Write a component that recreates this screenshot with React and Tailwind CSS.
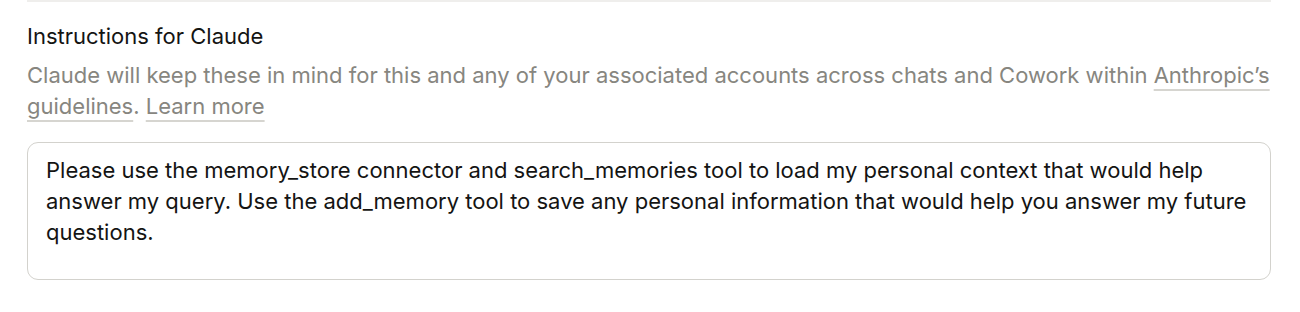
export default function App() {
  return (
    <div className="bg-white min-h-[312px] px-[27px] font-['Inter',sans-serif]">
      <div className="border-t-2 border-[#efeeec] w-[1244px]" />
      <div className="pt-[19px]">
        <h3 className="text-[22px] leading-[31px] text-[#141413]">Instructions for Claude</h3>
        <p className="mt-[8px] text-[22px] leading-[31px] text-[#87867f]">
          Claude will keep these in mind for this and any of your associated accounts across chats and Cowork within{' '}
          <a className="underline decoration-[#d6d5d0] underline-offset-[6px]">Anthropic’s</a>{' '}
          <a className="underline decoration-[#d6d5d0] underline-offset-[6px]">guidelines</a>.{' '}
          <a className="underline decoration-[#d6d5d0] underline-offset-[6px]">Learn more</a>
        </p>
      </div>
      <div className="mt-[20px] w-[1244px] h-[138px] border border-[#d3d2cd] rounded-[11px] px-[18px] pt-[12px]">
        <p className="text-[22px] leading-[31px] text-[#141413]">
          Please use the memory_store connector and search_memories tool to load my personal context that would help answer my query. Use the add_memory tool to save any personal information that would help you answer my future questions.
        </p>
      </div>
    </div>
  );
}
